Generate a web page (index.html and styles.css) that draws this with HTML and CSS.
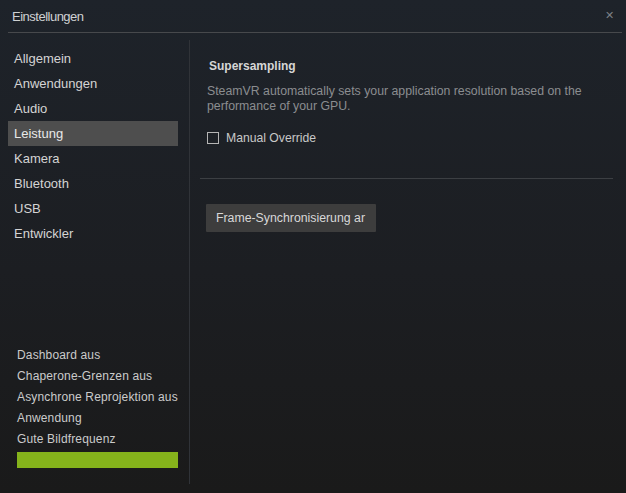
FILE: index.html
```html
<!DOCTYPE html>
<html>
<head>
<meta charset="utf-8">
<link rel="stylesheet" href="styles.css">
</head>
<body>
<div class="window">
  <header class="titlebar">
    <span class="title">Einstellungen</span>
    <span class="close">&#x2715;</span>
  </header>
  <div class="main">
    <aside class="sidebar">
      <nav class="nav">
        <div class="nav-item">Allgemein</div>
        <div class="nav-item">Anwendungen</div>
        <div class="nav-item">Audio</div>
        <div class="nav-item active">Leistung</div>
        <div class="nav-item">Kamera</div>
        <div class="nav-item">Bluetooth</div>
        <div class="nav-item">USB</div>
        <div class="nav-item">Entwickler</div>
      </nav>
      <div class="status">
        <div class="status-item">Dashboard aus</div>
        <div class="status-item">Chaperone-Grenzen aus</div>
        <div class="status-item">Asynchrone Reprojektion aus</div>
        <div class="status-item">Anwendung</div>
        <div class="status-item">Gute Bildfrequenz</div>
        <div class="status-bar"></div>
      </div>
    </aside>
    <section class="content">
      <div class="section">
        <div class="section-title">Supersampling</div>
        <p class="desc">SteamVR automatically sets your application resolution based on the performance of your GPU.</p>
        <label class="check"><span class="box"></span><span>Manual Override</span></label>
      </div>
      <div class="rule"></div>
      <div class="btn">Frame-Synchronisierung ar</div>
    </section>
  </div>
</div>
</body>
</html>
```

FILE: styles.css
```css
html, body {
  margin: 0;
  padding: 0;
}
body {
  width: 626px;
  height: 493px;
  overflow: hidden;
  background: linear-gradient(to bottom, #1e232a 0%, #1c1e22 55%, #1a1a1a 100%);
  font-family: "Liberation Sans", Arial, sans-serif;
  color: #d2d2d2;
}
.window {
  padding: 0 4px 0 8px;
}
.titlebar {
  height: 33px;
  border-bottom: 1px solid #47494c;
  display: flex;
  align-items: center;
  justify-content: space-between;
  box-sizing: border-box;
}
.title {
  padding-left: 4px;
  font-size: 13px;
  letter-spacing: -0.5px;
  color: #cfd1d3;
}
.close {
  font-size: 11px;
  color: #7d8186;
  margin-right: 8px;
  margin-top: -1px;
}
.main {
  display: flex;
  margin-top: 7px;
  height: 444px;
}
.sidebar {
  width: 182px;
  border-right: 1px solid #303338;
  display: flex;
  flex-direction: column;
  justify-content: space-between;
  box-sizing: border-box;
}
.nav {
  padding-top: 6px;
}
.nav-item {
  width: 170px;
  height: 25px;
  line-height: 25px;
  padding-left: 6px;
  box-sizing: border-box;
  font-size: 13px;
  color: #d4d4d4;
}
.nav-item.active {
  background: #4e4e4e;
  color: #e8e8e8;
}
.status {
  padding-left: 9px;
  padding-bottom: 16px;
}
.status-item {
  height: 21px;
  line-height: 21px;
  font-size: 12px;
  letter-spacing: 0.15px;
  color: #cbcbcb;
}
.status-bar {
  margin-top: 2px;
  width: 161px;
  height: 16px;
  background: #85b31b;
}
.content {
  flex: 1;
  padding: 0 9px 0 10px;
}
.section {
  padding: 18px 0 0 7px;
  height: 138px;
  box-sizing: border-box;
}
.section-title {
  font-size: 12px;
  font-weight: bold;
  color: #d6d6d6;
  padding-left: 2px;
  line-height: 16px;
}
.desc {
  margin: 10px 0 0 0;
  font-size: 12.3px;
  line-height: 15px;
  color: #8b8d90;
  width: 395px;
}
.check {
  display: flex;
  align-items: center;
  margin-top: 17px;
  font-size: 12.2px;
  color: #c8c8c8;
}
.box {
  width: 10px;
  height: 10px;
  border: 1px solid #b5b5b5;
  margin-right: 7px;
}
.rule {
  height: 1px;
  background: #3c3f43;
}
.btn {
  margin: 25px 0 0 6px;
  width: 170px;
  height: 28px;
  line-height: 28px;
  background: #3d3d3d;
  color: #d8d8d8;
  font-size: 12.3px;
  padding-left: 10px;
  box-sizing: border-box;
  white-space: nowrap;
  border-radius: 1px;
}
```
